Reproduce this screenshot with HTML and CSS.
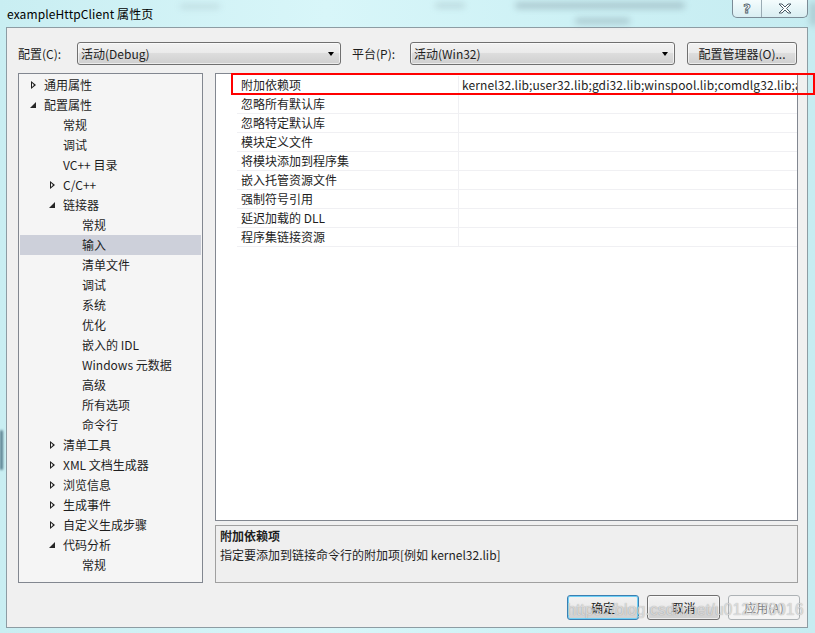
FILE: index.html
```html
<!DOCTYPE html>
<html lang="zh-CN">
<head>
<meta charset="utf-8">
<title>exampleHttpClient 属性页</title>
<link rel="stylesheet" href="styles.css">
</head>
<body>
<div class="desk">
  <div class="blur bl1"></div>
  <div class="blur bl2"></div>
  <div class="blur bl3"></div>
  <div class="blur bl4"></div>
  <div class="blur bl5"></div>
  <div class="blur bl6"></div>
  <div class="titlebar">
    <span class="title">exampleHttpClient 属性页</span>
    <div class="caption-btns">
      <div class="cbtn help">?</div>
      <div class="cbtn close">
        <svg width="16" height="11" viewBox="0 0 16 11"><path d="M2 1 L5 1 L8 4 L11 1 L14 1 L9.5 5.5 L14 10 L11 10 L8 7 L5 10 L2 10 L6.5 5.5 Z" fill="#fff" stroke="#4a5b66" stroke-width="1"/></svg>
      </div>
    </div>
  </div>
  <div class="client">
    <div class="toprow">
      <span class="lbl lbl-c">配置(C):</span>
      <div class="combo combo1"><span>活动(Debug)</span><i class="drop"></i></div>
      <span class="lbl lbl-p">平台(P):</span>
      <div class="combo combo2"><span>活动(Win32)</span><i class="drop"></i></div>
      <div class="btn cfgmgr">配置管理器(O)...</div>
    </div>
    <div class="main">
      <div class="tree">
        <div class="node l0"><i class="arr closed"></i>通用属性</div>
        <div class="node l0"><i class="arr open"></i>配置属性</div>
        <div class="node l1"><i class="arr"></i>常规</div>
        <div class="node l1"><i class="arr"></i>调试</div>
        <div class="node l1"><i class="arr"></i>VC++ 目录</div>
        <div class="node l1"><i class="arr closed"></i>C/C++</div>
        <div class="node l1"><i class="arr open"></i>链接器</div>
        <div class="node l2"><i class="arr"></i>常规</div>
        <div class="node l2 sel"><i class="arr"></i>输入</div>
        <div class="node l2"><i class="arr"></i>清单文件</div>
        <div class="node l2"><i class="arr"></i>调试</div>
        <div class="node l2"><i class="arr"></i>系统</div>
        <div class="node l2"><i class="arr"></i>优化</div>
        <div class="node l2"><i class="arr"></i>嵌入的 IDL</div>
        <div class="node l2"><i class="arr"></i>Windows 元数据</div>
        <div class="node l2"><i class="arr"></i>高级</div>
        <div class="node l2"><i class="arr"></i>所有选项</div>
        <div class="node l2"><i class="arr"></i>命令行</div>
        <div class="node l1"><i class="arr closed"></i>清单工具</div>
        <div class="node l1"><i class="arr closed"></i>XML 文档生成器</div>
        <div class="node l1"><i class="arr closed"></i>浏览信息</div>
        <div class="node l1"><i class="arr closed"></i>生成事件</div>
        <div class="node l1"><i class="arr closed"></i>自定义生成步骤</div>
        <div class="node l1"><i class="arr open"></i>代码分析</div>
        <div class="node l2"><i class="arr"></i>常规</div>
      </div>
      <div class="right">
        <div class="grid">
          <div class="row"><span class="name">附加依赖项</span><span class="val">kernel32.lib;user32.lib;gdi32.lib;winspool.lib;comdlg32.lib;advapi32.lib;shell32.lib;ole32.lib;oleaut32.lib;uuid.lib;odbc32.lib;odbccp32.lib;%(AdditionalDependencies)</span></div>
          <div class="row"><span class="name">忽略所有默认库</span><span class="val"></span></div>
          <div class="row"><span class="name">忽略特定默认库</span><span class="val"></span></div>
          <div class="row"><span class="name">模块定义文件</span><span class="val"></span></div>
          <div class="row"><span class="name">将模块添加到程序集</span><span class="val"></span></div>
          <div class="row"><span class="name">嵌入托管资源文件</span><span class="val"></span></div>
          <div class="row"><span class="name">强制符号引用</span><span class="val"></span></div>
          <div class="row"><span class="name">延迟加载的 DLL</span><span class="val"></span></div>
          <div class="row"><span class="name">程序集链接资源</span><span class="val"></span></div>
        </div>
        <div class="desc">
          <div class="desc-title">附加依赖项</div>
          <div class="desc-text">指定要添加到链接命令行的附加项[例如 kernel32.lib]</div>
        </div>
      </div>
    </div>
    <div class="buttons">
      <div class="btn ok">确定</div>
      <div class="btn cancel">取消</div>
      <div class="btn apply">应用(A)</div>
    </div>
  </div>
  <div class="highlight"></div>
  <div class="watermark">https://blog.csdn.net/u012278016</div>
</div>
</body>
</html>
```
FILE: styles.css
```css
* { box-sizing: border-box; }
html, body { margin: 0; padding: 0; }
body {
  font-family: "Noto Sans CJK SC", sans-serif;
  font-size: 12px;
  color: #1e1e1e;
}
.desk {
  position: relative;
  width: 815px;
  height: 633px;
  overflow: hidden;
  padding: 0 7px 0 6px;
  display: flex;
  flex-direction: column;
  background: linear-gradient(90deg, #c9eef2 0%, #d8f6f9 40%, #cdf1f5 70%, #c6ecf1 100%);
}
.blur {
  position: absolute;
  background: rgba(110, 130, 140, 0.35);
  filter: blur(3px);
  border-radius: 4px;
}
.bl1 { left: 515px; top: 2px; width: 170px; height: 7px; }
.bl2 { left: 575px; top: 18px; width: 55px; height: 6px; }
.bl3 { left: 435px; top: 3px; width: 30px; height: 5px; background: rgba(110,130,140,0.25); }
.bl4 { left: 180px; top: 4px; width: 40px; height: 5px; background: rgba(110,130,140,0.18); }
.bl5 { left: 0; top: 430px; width: 3px; height: 40px; background: rgba(40,80,100,0.7); filter: blur(1px); }
.bl6 { left: 810px; top: 2px; width: 8px; height: 24px; background: rgba(110,130,140,0.3); }

.titlebar {
  position: relative;
  height: 27px;
  display: flex;
  justify-content: space-between;
  align-items: flex-start;
}
.title {
  margin-left: 1px;
  margin-top: 5px;
  line-height: 18px;
  font-size: 12px;
  color: #000;
  letter-spacing: 0.1px;
}
.caption-btns {
  display: flex;
  height: 18px;
  border: 1px solid #7b8b96;
  border-top: none;
  border-radius: 0 0 5px 5px;
  background: linear-gradient(#f4fcfd, #d9eef2);
  overflow: hidden;
}
.cbtn {
  height: 17px;
  display: flex;
  align-items: center;
  justify-content: center;
}
.help {
  width: 29px;
  border-right: 1px solid #9aabb4;
  font-family: "DejaVu Sans", sans-serif;
  font-size: 13px;
  font-weight: bold;
  color: #fff;
  -webkit-text-stroke: 0.8px #4a5b66;
}
.close { width: 45px; }

.client {
  height: 601px;
  border: 1px solid #8d9ca3;
  background: #f0f0f0;
  display: flex;
  flex-direction: column;
  padding: 14px 7px 0 11px;
}
.toprow {
  height: 23px;
  display: flex;
  align-items: center;
}
.lbl { line-height: 23px; }
.lbl-c { width: 59px; }
.lbl-p { width: 58px; margin-left: 11px; }
.combo, .btn {
  height: 23px;
  border: 1px solid #707070;
  border-radius: 3px;
  background: linear-gradient(#f2f2f2 0%, #ebebeb 45%, #dddddd 50%, #cfcfcf 100%);
  box-shadow: inset 0 0 0 1px rgba(255,255,255,0.6);
}
.combo {
  position: relative;
  display: flex;
  align-items: center;
  padding-left: 3px;
  line-height: 20px;
}
.combo1 { width: 264px; }
.combo2 { width: 265px; }
.drop {
  position: absolute;
  right: 6px;
  top: 9px;
  width: 0;
  height: 0;
  border-left: 3.5px solid transparent;
  border-right: 3.5px solid transparent;
  border-top: 4px solid #000;
}
.btn {
  display: flex;
  align-items: center;
  justify-content: center;
  line-height: 20px;
}
.cfgmgr { width: 110px; margin-left: 12px; }

.main {
  margin-top: 8px;
  height: 510px;
  display: flex;
  gap: 12px;
}
.tree {
  width: 185px;
  border: 1px solid #828790;
  background: #f5f5f5;
  padding: 1px 1px 0 0;
  overflow: hidden;
}
.node {
  height: 20px;
  line-height: 20px;
  display: flex;
  align-items: center;
  white-space: nowrap;
  margin-left: 1px;
}
.node.l0 { padding-left: 10px; }
.node.l1 { padding-left: 29px; }
.node.l2 { padding-left: 48px; }
.node.sel { background: #cdd0da; }
.arr {
  width: 14px;
  height: 20px;
  flex: none;
  position: relative;
}
.arr.closed::before {
  content: "";
  position: absolute;
  left: 1px;
  top: 6px;
  width: 0; height: 0;
  border-top: 4px solid transparent;
  border-bottom: 4px solid transparent;
  border-left: 5px solid #1e1e1e;
}
.arr.closed::after {
  content: "";
  position: absolute;
  left: 2px;
  top: 8px;
  width: 0; height: 0;
  border-top: 2px solid transparent;
  border-bottom: 2px solid transparent;
  border-left: 2.5px solid #f5f5f5;
}
.arr.open::before {
  content: "";
  position: absolute;
  left: 0;
  top: 7px;
  width: 0; height: 0;
  border-left: 6px solid transparent;
  border-bottom: 6px solid #262626;
}

.right {
  width: 583px;
  display: flex;
  flex-direction: column;
  gap: 4px;
}
.grid {
  height: 448px;
  border: 1px solid #828790;
  background: #fff;
  padding: 2px 0 0 21px;
  overflow: hidden;
}
.row {
  height: 19px;
  border-bottom: 1px solid #f0f0f3;
  display: flex;
  line-height: 18px;
}
.name {
  width: 221px;
  flex: none;
  padding-left: 4px;
  white-space: nowrap;
}
.val {
  flex: 1;
  min-width: 0;
  border-left: 1px solid #f0f0f3;
  padding-left: 3px;
  white-space: nowrap;
  overflow: hidden;
  letter-spacing: 0.1px;
}
.desc {
  height: 58px;
  border: 1px solid #a0a0a0;
  background: #efefef;
  padding: 0 0 0 4px;
  line-height: 19px;
}
.desc-title { font-weight: bold; }

.buttons {
  margin-top: 12px;
  height: 25px;
  display: flex;
  justify-content: flex-end;
  gap: 8px;
}
.buttons .btn { height: 25px; }
.ok {
  width: 72px;
  border-color: #3c7fb1;
  box-shadow: inset 0 0 0 1px #6fd0f6;
}
.cancel { width: 73px; }
.apply {
  width: 72px;
  border-color: #adb2b5;
  background: #f4f4f4;
  color: #838383;
  box-shadow: none;
}

.highlight {
  position: absolute;
  left: 231px;
  top: 73px;
  width: 584px;
  height: 22px;
  border: 2px solid #ff0000;
}
.watermark {
  position: absolute;
  left: 567px;
  top: 601px;
  font-family: "Liberation Sans", Arial, sans-serif;
  font-size: 16px;
  line-height: 18px;
  color: rgba(235, 235, 235, 0.75);
  text-shadow: 0 0 1px rgba(0,0,0,0.35);
  white-space: nowrap;
}
```
